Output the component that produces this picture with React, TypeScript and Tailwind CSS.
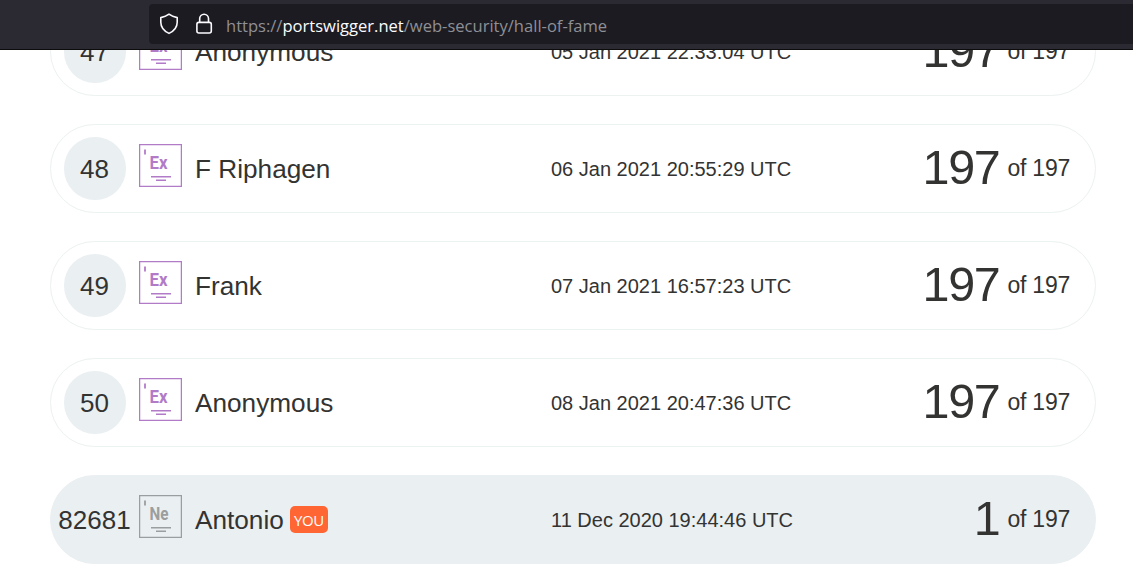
type Level = "Ex" | "Ne";

interface Entry {
  rank: string;
  level: Level;
  name: string;
  date: string;
  solved: number;
  you?: boolean;
}

const entries: Entry[] = [
  { rank: "47", level: "Ex", name: "Anonymous", date: "05 Jan 2021 22:33:04 UTC", solved: 197 },
  { rank: "48", level: "Ex", name: "F Riphagen", date: "06 Jan 2021 20:55:29 UTC", solved: 197 },
  { rank: "49", level: "Ex", name: "Frank", date: "07 Jan 2021 16:57:23 UTC", solved: 197 },
  { rank: "50", level: "Ex", name: "Anonymous", date: "08 Jan 2021 20:47:36 UTC", solved: 197 },
  { rank: "82681", level: "Ne", name: "Antonio", date: "11 Dec 2020 19:44:46 UTC", solved: 1, you: true },
];

function LevelBadge({ level }: { level: Level }) {
  const color = level === "Ex" ? "text-[#b27bc8]" : "text-[#9b9e9e]";
  return (
    <svg width="43" height="43" viewBox="0 0 43 43" className={`block ${color}`}>
      <rect x="0.6" y="0.6" width="41.8" height="41.8" fill="none" stroke="currentColor" strokeWidth="1.3" />
      <path d="M6 5.5v5" stroke="currentColor" strokeWidth="1.8" />
      <text
        x="10.5"
        y="25"
        fill="currentColor"
        fontFamily="Roboto, 'Liberation Sans', sans-serif"
        fontWeight="700"
        fontSize="17.5"
        textLength={level === "Ex" ? 18 : 19}
        lengthAdjust="spacingAndGlyphs"
      >
        {level}
      </text>
      <path d="M12 32.7h20M17 36.3h10" stroke="currentColor" strokeWidth="1.6" />
    </svg>
  );
}

function Row({ entry }: { entry: Entry }) {
  return (
    <li
      className={`flex h-[89px] items-center rounded-[44.5px] border ${
        entry.you ? "border-[#eaeff2] bg-[#eaeff2]" : "border-[#ecf1f1] bg-white"
      }`}
    >
      <div className="ml-[13px] flex h-[63px] w-[62px] shrink-0 items-center justify-center rounded-full bg-[#eaeff2] text-[26px]">
        <span className="mr-px mt-[2px] whitespace-nowrap">{entry.rank}</span>
      </div>
      <div className="mb-[6px] ml-[13px]">
        <LevelBadge level={entry.level} />
      </div>
      <div className="ml-[13px] flex w-[356px] items-center text-[26.2px]">
        <span className="mt-[2px]">{entry.name}</span>
        {entry.you && (
          <span className="ml-[6px] flex h-[27px] w-[38px] items-center justify-center rounded-[5px] bg-[#ff6633] pt-[2px] font-['Open_Sans','Noto_Sans',sans-serif] text-[15px] tracking-[-0.4px] text-white">
            YOU
          </span>
        )}
      </div>
      <div className="whitespace-nowrap text-[20px]">{entry.date}</div>
      <div className="ml-auto mr-[25px] flex items-center whitespace-nowrap">
        <span className="mb-[3px] text-[48.5px] leading-[56px] tracking-[-1.3px]">{entry.solved}</span>
        <span className="mb-px ml-[8px] text-[23px] leading-6 tracking-[-0.25px]">of 197</span>
      </div>
    </li>
  );
}

export default function App() {
  return (
    <div className="h-[580px] w-full overflow-hidden bg-white font-['Liberation_Sans',Arial,sans-serif] text-[#333332]">
      <header className="relative z-10 h-[50px] border-b border-[#0c0c0d] bg-[#2b2a33] pl-[149px] pt-1">
        <div className="flex h-10 items-center rounded-l-[4px] bg-[#1c1b22] pl-[10px] text-[#fbfbfe]">
          <svg width="20" height="22" viewBox="0 0 20 22" fill="none" stroke="currentColor" strokeWidth="1.6" strokeLinejoin="round">
            <path d="M10 1.2C7.6 3 4.7 4 1.8 4.6v4.6c0 5.1 3.2 8.8 8.2 11.2 5-2.4 8.2-6.1 8.2-11.2V4.6C15.3 4 12.4 3 10 1.2Z" />
          </svg>
          <svg className="ml-[16px]" width="18" height="22" viewBox="0 0 18 22" fill="none" stroke="currentColor" strokeWidth="1.6">
            <rect x="1.9" y="9.4" width="14.4" height="10.6" rx="2" />
            <path d="M4.7 9.4V5.6a4.4 4.4 0 0 1 8.8 0v3.8" />
          </svg>
          <div className="ml-[13px] mt-[5px] whitespace-nowrap font-['Open_Sans','Noto_Sans',sans-serif] text-[16.56px] text-[#8f8f94]">
            https://<span className="text-[#fbfbfe]">portswigger.net</span>/web-security/hall-of-fame
          </div>
        </div>
      </header>
      <ul className="-mt-[43px] ml-[50px] flex w-[1046px] flex-col gap-7">
        {entries.map((entry) => (
          <Row key={entry.rank} entry={entry} />
        ))}
      </ul>
    </div>
  );
}
